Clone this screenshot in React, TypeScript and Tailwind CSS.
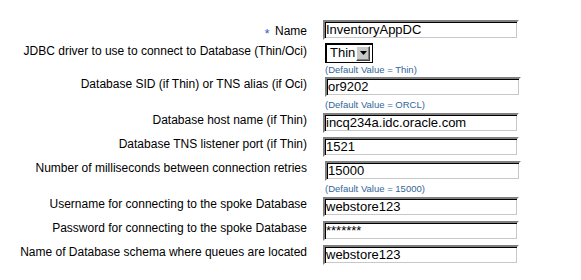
import React from "react";

const font = { fontFamily: '"Liberation Sans", Arial, sans-serif' };

function TextBox({ value, offset = false }: { value: string; offset?: boolean }) {
  return (
    <div
      className={
        "box-border w-[196px] h-[20px] flex items-center pl-[1px] text-[13px] leading-[16px] text-black bg-white border-2 border-t-[#808080] border-l-[#808080] border-r-white border-b-white shadow-[inset_1px_1px_0_#000,inset_-1px_-1px_0_#c8c8c8] whitespace-nowrap overflow-hidden " +
        (offset ? "ml-[2px]" : "")
      }
    >
      {value}
    </div>
  );
}

function Hint({ text }: { text: string }) {
  return (
    <div className="ml-[2px] mt-[1px] h-[12px] text-[9.5px] leading-[12px] text-[#336699] whitespace-nowrap">
      {text}
    </div>
  );
}

function SelectBox() {
  return (
    <div className="ml-[2px] box-border w-[48px] h-[20px] flex items-center justify-between pl-[4px] pr-[2px] border border-black shadow-[inset_1px_1px_0_#000] bg-white text-[13px] leading-[16px] text-black">
      <span>Thin</span>
      <div className="box-border w-[14px] h-[15px] flex items-center justify-center bg-[#c8c8c8] border border-t-white border-l-white border-r-[#404040] border-b-[#404040] shadow-[inset_-1px_-1px_0_#808080]">
        <svg width="7" height="4" viewBox="0 0 7 4">
          <polygon points="0,0 7,0 3.5,4" fill="#000" />
        </svg>
      </div>
    </div>
  );
}

function Row({
  label,
  children,
  mt,
  lpt,
}: {
  label: React.ReactNode;
  children: React.ReactNode;
  mt: string;
  lpt: string;
}) {
  return (
    <div className={"flex " + mt}>
      <div className={"w-[307px] text-right text-[12px] leading-[14px] text-black whitespace-nowrap " + lpt}>
        {label}
      </div>
      <div className="ml-[16px] flex flex-col">{children}</div>
    </div>
  );
}

export default function App() {
  return (
    <div className="w-[581px] h-[280px] bg-white pt-[20px] overflow-hidden" style={font}>
      <Row
        mt="mt-0"
        lpt="pt-[4px]"
        label={
          <>
            <span className="text-[#2f5fd0] text-[13px] leading-[14px] align-[-3px] mr-[2px]">*</span> Name
          </>
        }
      >
        <div className="h-[21px]">
          <TextBox value="InventoryAppDC" />
        </div>
      </Row>
      <Row mt="mt-[2px]" lpt="pt-[1px]" label="JDBC driver to use to connect to Database (Thin/Oci)">
        <SelectBox />
        <Hint text="(Default Value = Thin)" />
      </Row>
      <Row mt="mt-[1px]" lpt="pt-0" label="Database SID (if Thin) or TNS alias (if Oci)">
        <TextBox value="or9202" offset />
        <div className="mt-[1px]">
          <Hint text="(Default Value = ORCL)" />
        </div>
      </Row>
      <Row mt="mt-[2px]" lpt="pt-0" label="Database host name (if Thin)">
        <TextBox value="incq234a.idc.oracle.com" />
      </Row>
      <Row mt="mt-[4px]" lpt="pt-0" label="Database TNS listener port (if Thin)">
        <TextBox value="1521" />
      </Row>
      <Row mt="mt-[4px]" lpt="pt-0" label="Number of milliseconds between connection retries">
        <TextBox value="15000" offset />
        <div className="mt-[1px]">
          <Hint text="(Default Value = 15000)" />
        </div>
      </Row>
      <Row mt="mt-[2px]" lpt="pt-0" label="Username for connecting to the spoke Database">
        <TextBox value="webstore123" />
      </Row>
      <Row mt="mt-[4px]" lpt="pt-0" label="Password for connecting to the spoke Database">
        <TextBox value="*******" />
      </Row>
      <Row mt="mt-[4px]" lpt="pt-0" label="Name of Database schema where queues are located">
        <TextBox value="webstore123" />
      </Row>
    </div>
  );
}
